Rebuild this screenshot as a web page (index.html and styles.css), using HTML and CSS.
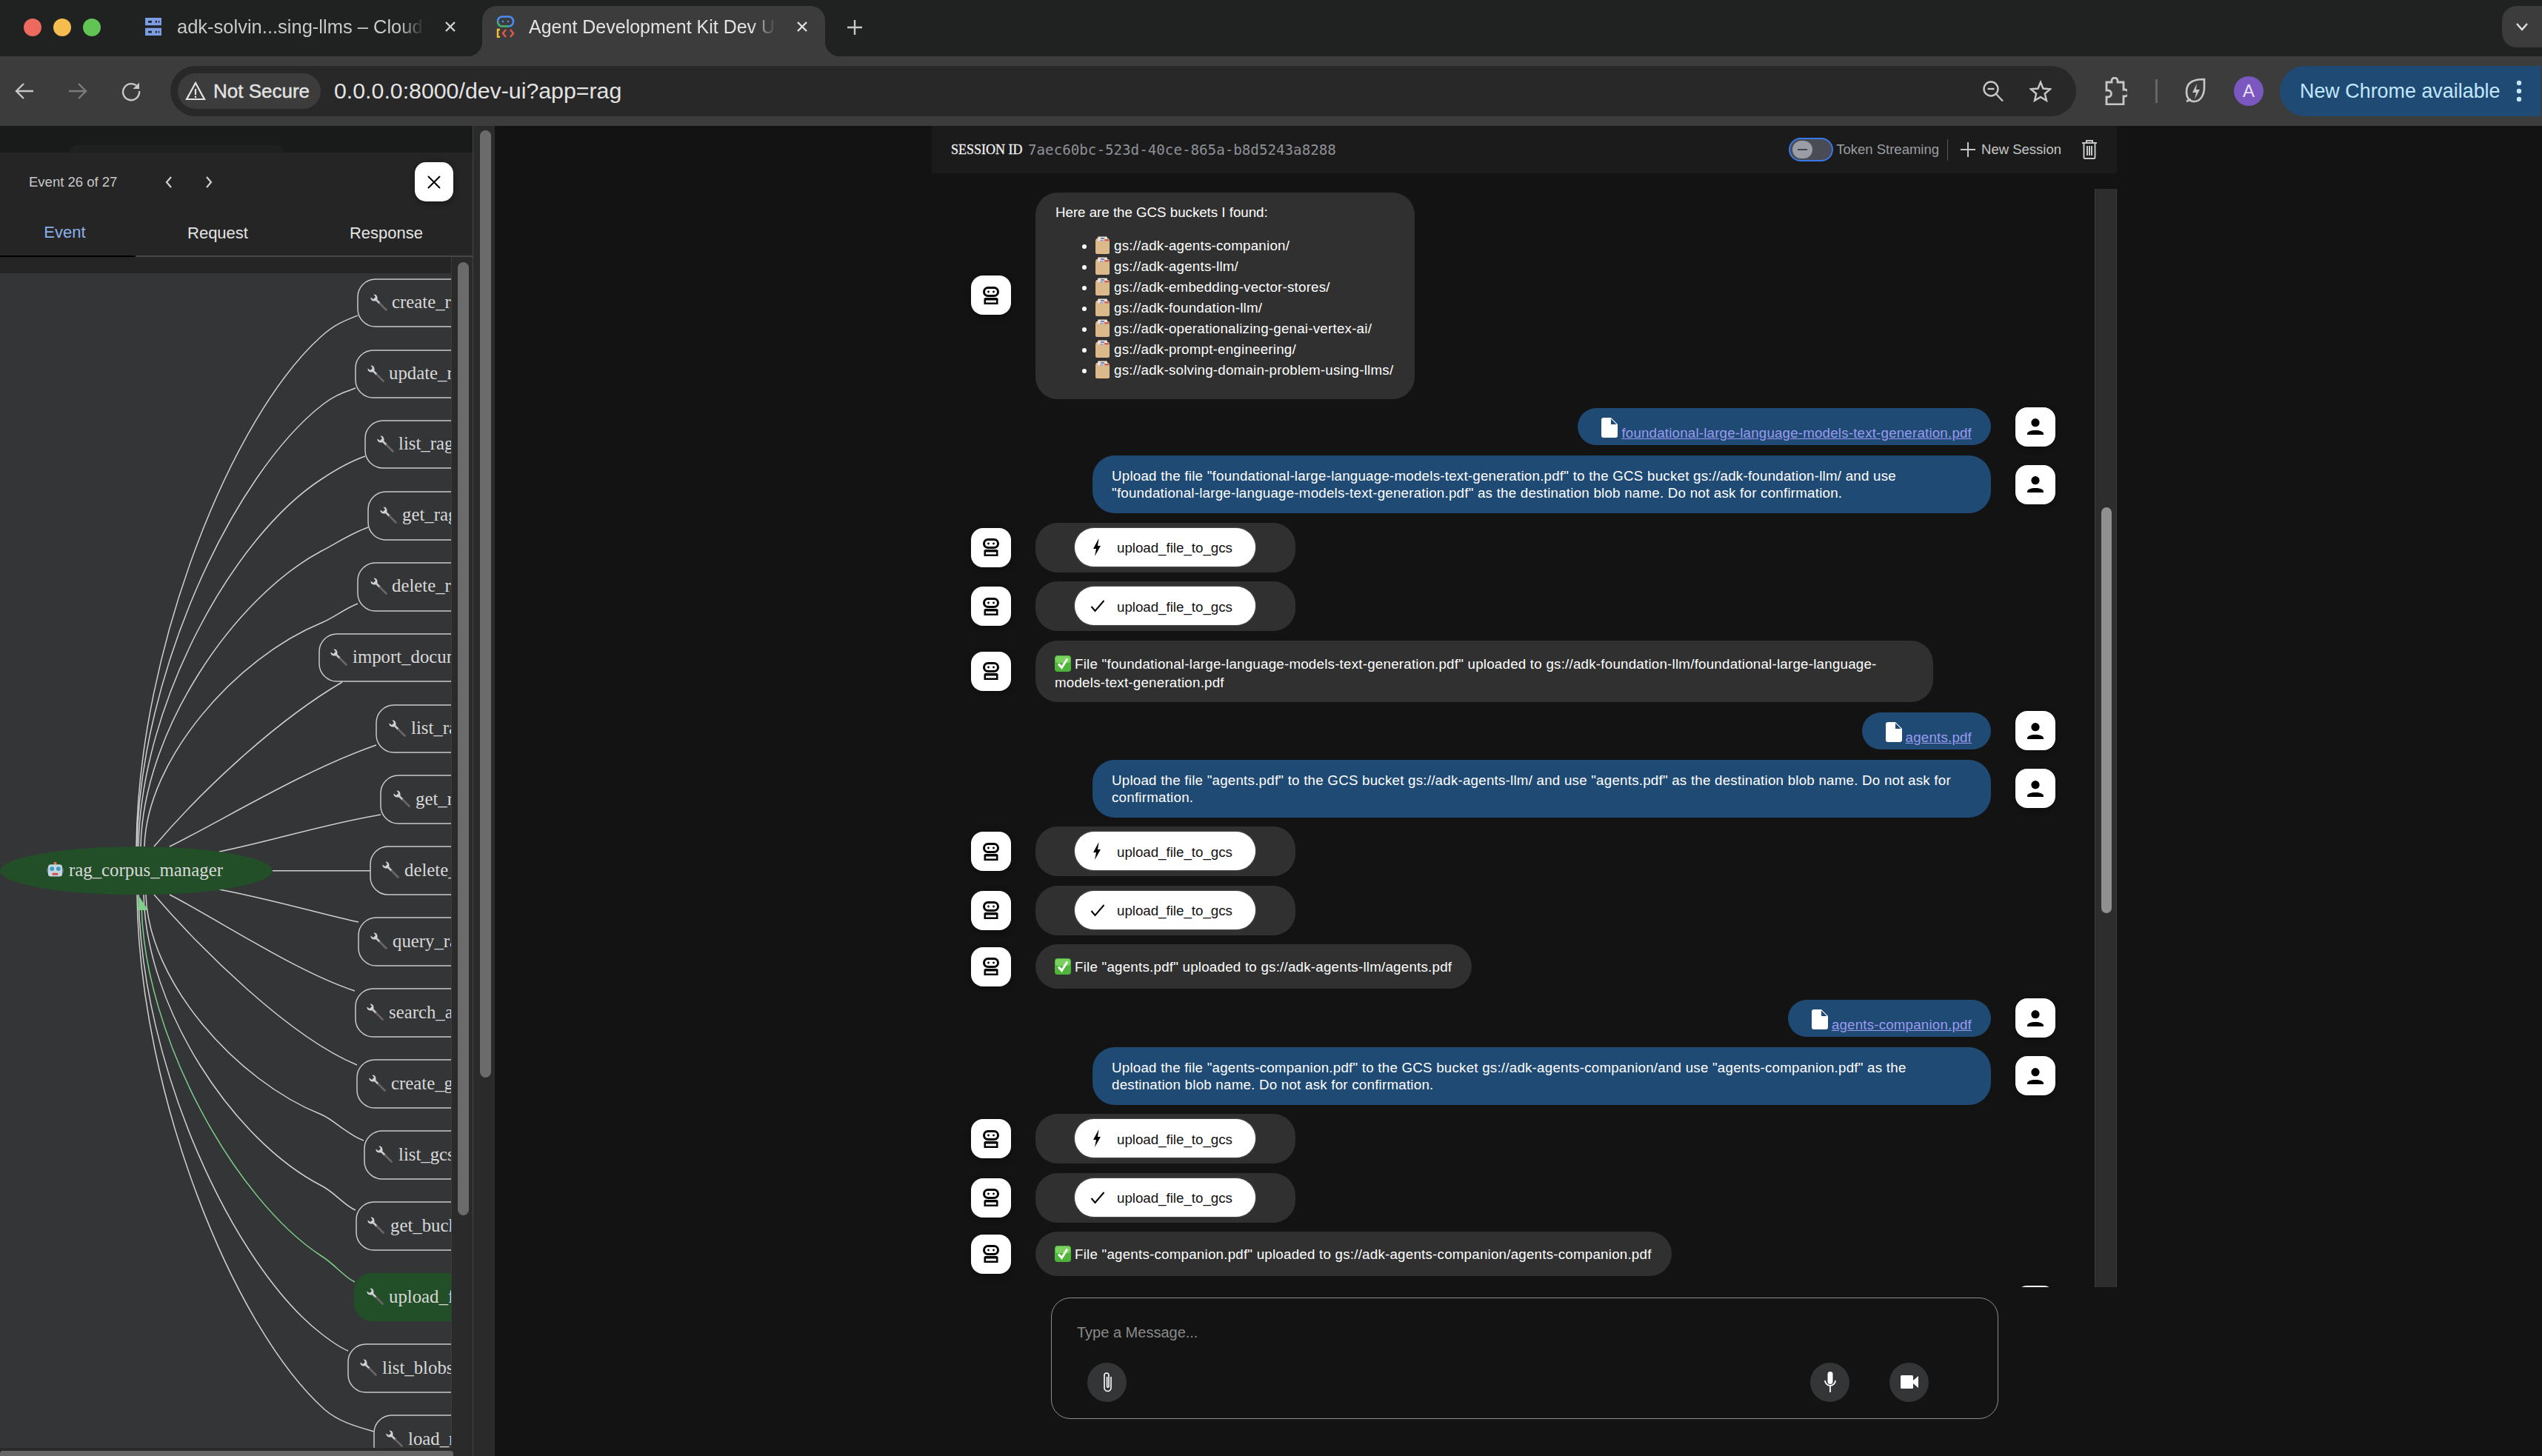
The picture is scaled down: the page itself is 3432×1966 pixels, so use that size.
FILE: index.html
```html
<!DOCTYPE html>
<html lang="en">
<head>
<meta charset="utf-8">
<title>Agent Development Kit Dev UI</title>
<link rel="stylesheet" href="styles.css">
</head>
<body>
<svg class="sprite" aria-hidden="true">
  <symbol id="robot" viewBox="0 0 22 24">
    <rect x="1.5" y="1.5" width="19" height="11" rx="5.5" fill="none" stroke="#000" stroke-width="3"/>
    <circle cx="7.5" cy="7" r="1.4" fill="#000"/><circle cx="14.5" cy="7" r="1.4" fill="#000"/>
    <path d="M3 15h16v0l1.5 1.5V24h-19v-7.500z" fill="#000"/>
    <rect x="4" y="18.500" width="14" height="3" fill="#fff"/>
  </symbol>
  <symbol id="person" viewBox="0 0 22 22">
    <circle cx="11" cy="5.700" r="5.600" fill="#000"/>
    <path d="M0 22v-1.500C0 18 5 16 11 16s11 2 11 4.500V22z" fill="#000"/>
  </symbol>
  <symbol id="file" viewBox="0 0 22 27">
    <path d="M3 0h10l9 9v15a3 3 0 0 1-3 3H3a3 3 0 0 1-3-3V3a3 3 0 0 1 3-3z" fill="#fff"/>
    <path d="M13 1.500L20.500 9H13z" fill="#1f4a73"/>
  </symbol>
  <symbol id="wrench" viewBox="0 0 24 24">
    <path d="M8.500 8.500L14 14" stroke="#c9c9cc" stroke-width="2.600" fill="none"/>
    <path d="M14 14L22.500 22.500" stroke="#6e6468" stroke-width="2.600" fill="none" stroke-linecap="round"/>
    <path d="M1.500 5.500C1 9 4 11 8 10.500L10.500 8C11 4 9 1 5.500 1.500L8 5L5 8z" fill="#d2d2d6"/>
  </symbol>
  <symbol id="bot-emoji" viewBox="0 0 24 22">
    <circle cx="12" cy="2.500" r="2.200" fill="#e0704c"/>
    <rect x="0" y="9" width="24" height="7" rx="2" fill="#5d6b75"/>
    <rect x="2" y="4" width="20" height="17" rx="4" fill="#c3d6df"/>
    <circle cx="7.500" cy="10" r="3" fill="#3d9ac9"/><circle cx="16.500" cy="10" r="3" fill="#3d9ac9"/>
    <rect x="8" y="16" width="8" height="3" fill="#d84a4a"/>
  </symbol>
  <symbol id="box" viewBox="0 0 19 24">
    <path d="M1 3h17l1 3v16a2 2 0 0 1-2 2H2a2 2 0 0 1-2-2V6z" fill="#dcb98a"/>
    <rect x="3" y="0.500" width="13" height="6" rx="1" fill="#efe3d0"/>
    <rect x="7" y="2" width="5" height="2" fill="#6b83c9"/>
    <rect x="12" y="4" width="6" height="2.500" fill="#d2605a"/>
    <rect x="6" y="5" width="5" height="1.500" fill="#8d97c9"/>
  </symbol>
  <symbol id="check-emoji" viewBox="0 0 22 22">
    <rect width="22" height="22" rx="4" fill="#4fb43a"/>
    <rect x="1" y="1" width="20" height="9" rx="3" fill="#7bd15f"/>
    <path d="M5 11.500l4.500 5L17 4.500" fill="none" stroke="#fff" stroke-width="3"/>
  </symbol>
  <symbol id="bolt" viewBox="0 0 12 24">
    <path d="M8.500 0L1 14h4L3 24l8-14H7z" fill="#000"/>
  </symbol>
  <symbol id="tick" viewBox="0 0 20 20">
    <path d="M1.500 11l5 6L18.500 3" fill="none" stroke="#000" stroke-width="2"/>
  </symbol>
</svg>

<header class="chrome">
  <div class="tabstrip">
    <span class="light red"></span><span class="light yellow"></span><span class="light green"></span>
    <div class="tab">
      <svg class="tab-icon" viewBox="0 0 32 35"><path d="M0 0h32v15H0zM0 20h32v15H0z" fill="#7c9ce4"/><path d="M6 6h7v4H6zM20 6h3v4h-3zM26 6h2v4h-2zM6 26h7v4H6zM20 26h3v4h-3zM26 26h2v4h-2z" fill="#202222"/></svg>
      <span class="tab-title">adk-solvin...sing-llms – Cloud</span>
      <svg class="tab-x" viewBox="0 0 18 18"><path d="M3 3l12 12M15 3L3 15" stroke="#d0d0d0" stroke-width="2.400"/></svg>
    </div>
    <div class="tab active">
      <svg class="tab-icon adk" viewBox="0 0 26 30"><rect x="2" y="1.500" width="21" height="13" rx="6" fill="none" stroke="#4c8df5" stroke-width="2.500"/><path d="M2 8a6 6 0 0 0 6 6.500h9" fill="none" stroke="#3fae5a" stroke-width="2.500"/><circle cx="9" cy="8" r="1.300" fill="#4c8df5"/><circle cx="16" cy="8" r="1.300" fill="#4c8df5"/><path d="M5 19H2v10h3" fill="none" stroke="#f5bd2e" stroke-width="2.500"/><path d="M13 19l-4 5 4 5" fill="none" stroke="#e2574c" stroke-width="2.500"/><path d="M19 19l4 5-4 5" fill="none" stroke="#e2574c" stroke-width="2.500"/></svg>
      <span class="tab-title">Agent Development Kit Dev U</span>
      <svg class="tab-x" viewBox="0 0 18 18"><path d="M3 3l12 12M15 3L3 15" stroke="#e0e0e0" stroke-width="2.400"/></svg>
    </div>
    <svg class="new-tab" viewBox="0 0 22 22"><path d="M11 1v20M1 11h20" stroke="#c8c8c8" stroke-width="2.400"/></svg>
    <div class="tab-search"><svg viewBox="0 0 18 12"><path d="M2 2l7 8 7-8" fill="none" stroke="#e3e3e3" stroke-width="2.400"/></svg></div>
  </div>
  <div class="toolbar">
    <svg class="nav" viewBox="0 0 28 28"><path d="M26 14H4M13 4L3 14l10 10" fill="none" stroke="#c7c7c7" stroke-width="2.400"/></svg>
    <svg class="nav" viewBox="0 0 28 28"><path d="M2 14h22M15 4l10 10-10 10" fill="none" stroke="#7c7c7c" stroke-width="2.400"/></svg>
    <svg class="nav" viewBox="0 0 28 28"><path d="M23.500 9.500A11 11 0 1 0 25 14" fill="none" stroke="#c7c7c7" stroke-width="2.400"/><path d="M25 2.500v8.500h-8.500z" fill="#c7c7c7"/></svg>
    <div class="omnibox">
      <div class="chip">
        <svg class="warn" viewBox="0 0 28 26"><path d="M14 2L2 24h24z" fill="none" stroke="#e3e3e3" stroke-width="2.200"/><path d="M14 10v8M14 19.500v2.500" stroke="#e3e3e3" stroke-width="2.200"/></svg>
        <span>Not Secure</span>
      </div>
      <span class="url">0.0.0.0:8000/dev-ui?app=rag</span>
      <svg class="omni-zoom" viewBox="0 0 30 30"><circle cx="12" cy="12" r="9.500" fill="none" stroke="#c7c7c7" stroke-width="2.400"/><path d="M19 19l9 9.500" stroke="#c7c7c7" stroke-width="2.400"/><path d="M7.500 12h9" stroke="#c7c7c7" stroke-width="2.400"/></svg>
      <svg class="omni-star" viewBox="0 0 30 30"><path d="M15 3l3.500 8.500 9.500.8-7.200 6.200 2.200 9.300L15 22.900 6.999 27.800l2.200-9.300L2 12.300l9.500-.8z" fill="none" stroke="#c7c7c7" stroke-width="2.400"/></svg>
    </div>
    <svg class="puzzle" viewBox="0 0 32 38"><path d="M4 6h7V4a4 4 0 0 1 8 0v2h8v10h2a4 4 0 0 1 0 9h-2v11H4V26h2a4 4 0 0 0 0-9H4z" transform="translate(0 1)" fill="none" stroke="#c7c7c7" stroke-width="2.800"/></svg>
    <span class="sep"></span>
    <svg class="perf" viewBox="0 0 30 38"><path d="M27 3C14 3 3 6 3 20c0 8 4 13 10 13h1c7 0 13-8 13-19z" fill="none" stroke="#c7c7c7" stroke-width="2.600"/><path d="M17 9l-6 12h5l-2 9 7-13h-5z" fill="#c7c7c7"/><path d="M3 33l6-3" stroke="#c7c7c7" stroke-width="2.600"/></svg>
    <span class="profile">A</span>
    <div class="update">
      <span>New Chrome available</span>
      <svg class="dots" viewBox="0 0 8 30"><circle cx="4" cy="4" r="3.200" fill="#c2e7ff"/><circle cx="4" cy="15" r="3.200" fill="#c2e7ff"/><circle cx="4" cy="26" r="3.200" fill="#c2e7ff"/></svg>
    </div>
  </div>
</header>

<main class="page">
  <aside class="side">
    <div class="side-main">
      <div class="side-top"><div class="side-top-tab"></div></div>
      <section class="event-panel">
        <div class="event-head">
          <span class="event-count">Event 26 of 27</span>
          <svg class="chev first" viewBox="0 0 12 20"><path d="M9 3L3 10l6 7" fill="none" stroke="#d0d0d0" stroke-width="2.200"/></svg>
          <svg class="chev" viewBox="0 0 12 20"><path d="M3 3l6 7-6 7" fill="none" stroke="#d0d0d0" stroke-width="2.200"/></svg>
          <button class="close"><svg viewBox="0 0 20 20"><path d="M2 2l16 16M18 2L2 18" stroke="#000" stroke-width="2"/></svg></button>
        </div>
        <div class="event-tabs">
          <span class="event-tab on">Event</span>
          <span class="event-tab">Request</span>
          <span class="event-tab">Response</span>
        </div>
      </section>
      <div class="graph-wrap">
        <div class="graph-col">
          <div class="graph-strip"></div>
          <svg class="graph" viewBox="0 369 609 1586">
            <g class="edges">
              <path d="M184 1143C187 874 314 561 434 454C452 438 465 433 483 426"/>
              <path d="M185 1143C188 910 316 639 436 546C454 532 465 530 480 524"/>
              <path d="M187 1143C190 950 315 724 434 647C452 635 470 624 493 616"/>
              <path d="M190 1143C193 987 317 806 434 744C452 735 472 721 497 712"/>
              <path d="M195 1143C198 1025 319 888 434 841C451 834 465 822 483 815"/>
              <path d="M208 1143C270 1070 370 975 462 921"/>
              <path d="M229 1143C300 1108 410 1040 508 1006"/>
              <path d="M296 1150C370 1135 440 1112 514 1100"/>
              <path d="M367 1175.700H500"/>
              <path d="M296 1201C370 1215 440 1236 484 1245"/>
              <path d="M229 1208C300 1245 400 1312 479 1338"/>
              <path d="M208 1208C270 1280 390 1400 482 1438"/>
              <path d="M197 1208C200 1324 318 1459 434 1505C451 1512 470 1533 491 1540"/>
              <path d="M194 1208C197 1361 315 1540 434 1601C452 1610 465 1628 480 1634"/>
              <path d="M187 1208C190 1439 315 1709 434 1801C452 1815 460 1820 470 1824"/>
              <path d="M185 1208C188 1479 317 1795 438 1903C456 1919 480 1926 505 1933"/>
              <path class="edge-on" d="M191 1222C194 1398 317 1620 434 1696C452 1707 465 1725 479 1731"/>
            </g>
            <polygon class="arrow" points="187,1209 186,1229 200,1229"/>
            <ellipse class="agent" cx="184" cy="1175.700" rx="184" ry="32.500"/>
            <use href="#bot-emoji" x="63" y="1163" width="23" height="22"/>
            <text class="agent-label" x="93" y="1184">rag_corpus_manager</text>

            <g class="node"><rect x="483" y="377" width="300" height="64" rx="24"/><use href="#wrench" x="499" y="396" width="24" height="24"/><text x="529" y="417">create_rag_corpus</text></g>
            <g class="node"><rect x="480" y="473" width="300" height="64" rx="24"/><use href="#wrench" x="495" y="492" width="24" height="24"/><text x="525" y="513">update_rag_corpus</text></g>
            <g class="node"><rect x="493" y="568" width="300" height="64" rx="24"/><use href="#wrench" x="508" y="587" width="24" height="24"/><text x="538" y="608">list_rag_corpora</text></g>
            <g class="node"><rect x="497" y="664" width="300" height="65" rx="24"/><use href="#wrench" x="512" y="683" width="24" height="24"/><text x="543" y="704">get_rag_corpus</text></g>
            <g class="node"><rect x="483" y="760" width="300" height="65" rx="24"/><use href="#wrench" x="499" y="779" width="24" height="24"/><text x="529" y="800">delete_rag_corpus</text></g>
            <g class="node"><rect x="431" y="856" width="300" height="64" rx="24"/><use href="#wrench" x="445" y="875" width="24" height="24"/><text x="476" y="896">import_document</text></g>
            <g class="node"><rect x="508" y="952" width="300" height="64" rx="24"/><use href="#wrench" x="524" y="971" width="24" height="24"/><text x="555" y="992">list_rag_files</text></g>
            <g class="node"><rect x="514" y="1047" width="300" height="65" rx="24"/><use href="#wrench" x="530" y="1066" width="24" height="24"/><text x="561" y="1088">get_rag_file</text></g>
            <g class="node"><rect x="500" y="1143" width="300" height="65" rx="24"/><use href="#wrench" x="515" y="1162" width="24" height="24"/><text x="546" y="1184">delete_rag_file</text></g>
            <g class="node"><rect x="484" y="1239" width="300" height="65" rx="24"/><use href="#wrench" x="499" y="1258" width="24" height="24"/><text x="530" y="1280">query_rag_corpus</text></g>
            <g class="node"><rect x="480" y="1335" width="300" height="65" rx="24"/><use href="#wrench" x="494" y="1354" width="24" height="24"/><text x="525" y="1376">search_all_corpora</text></g>
            <g class="node"><rect x="482" y="1431" width="300" height="65" rx="24"/><use href="#wrench" x="497" y="1450" width="24" height="24"/><text x="528" y="1472">create_gcs_bucket</text></g>
            <g class="node"><rect x="492" y="1527" width="300" height="65" rx="24"/><use href="#wrench" x="506" y="1546" width="24" height="24"/><text x="538" y="1568">list_gcs_buckets</text></g>
            <g class="node"><rect x="481" y="1623" width="300" height="65" rx="24"/><use href="#wrench" x="495" y="1642" width="24" height="24"/><text x="527" y="1664">get_bucket_details</text></g>
            <g class="node on"><rect x="478" y="1719" width="300" height="65" rx="24"/><use href="#wrench" x="494" y="1738" width="24" height="24"/><text x="525" y="1760">upload_file_to_gcs</text></g>
            <g class="node"><rect x="470" y="1815" width="300" height="65" rx="24"/><use href="#wrench" x="485" y="1834" width="24" height="24"/><text x="516" y="1856">list_blobs_in_bucket</text></g>
            <g class="node"><rect x="505" y="1911" width="300" height="65" rx="24"/><use href="#wrench" x="520" y="1930" width="24" height="24"/><text x="551" y="1952">load_rag_file</text></g>
          </svg>
        </div>
        <div class="inner-track"><div class="inner-thumb"></div></div>
      </div>
      <div class="hbar"><div class="hthumb"></div></div>
    </div>
    <div class="outer-track"><div class="outer-thumb"></div></div>
  </aside>

  <section class="chat">
    <div class="session-bar">
      <span class="session-label">SESSION ID</span>
      <span class="session-id">7aec60bc-523d-40ce-865a-b8d5243a8288</span>
      <span class="toggle"><span class="knob"></span></span>
      <span class="session-text dim">Token Streaming</span>
      <span class="session-sep"></span>
      <svg class="plus" viewBox="0 0 20 20"><path d="M10 0v20M0 10h20" stroke="#c4c7c5" stroke-width="2"/></svg>
      <span class="session-text">New Session</span>
      <svg class="trash" viewBox="0 0 22 26"><path d="M1 4h20M7 3V1h8v2M3.500 5v19a1.500 1.500 0 0 0 1.500 1h12a1.500 1.500 0 0 0 1.500-1V5M8 8v13M11 8v13M14 8v13" fill="none" stroke="#c4c7c5" stroke-width="2"/></svg>
    </div>
    <div class="chat-body">
      <div class="messages">
        <div class="row">
          <span class="avatar"><svg class="av-bot"><use href="#robot"/></svg></span>
          <div class="bubble bot intro">
            <p>Here are the GCS buckets I found:</p>
            <ul>
              <li><svg class="box-ic"><use href="#box"/></svg>gs://adk-agents-companion/</li>
              <li><svg class="box-ic"><use href="#box"/></svg>gs://adk-agents-llm/</li>
              <li><svg class="box-ic"><use href="#box"/></svg>gs://adk-embedding-vector-stores/</li>
              <li><svg class="box-ic"><use href="#box"/></svg>gs://adk-foundation-llm/</li>
              <li><svg class="box-ic"><use href="#box"/></svg>gs://adk-operationalizing-genai-vertex-ai/</li>
              <li><svg class="box-ic"><use href="#box"/></svg>gs://adk-prompt-engineering/</li>
              <li><svg class="box-ic"><use href="#box"/></svg>gs://adk-solving-domain-problem-using-llms/</li>
            </ul>
          </div>
        </div>

        <div class="row user">
          <div class="bubble file"><svg class="file-ic"><use href="#file"/></svg><a class="file-link">foundational-large-language-models-text-generation.pdf</a></div>
          <span class="avatar"><svg class="av-user"><use href="#person"/></svg></span>
        </div>
        <div class="row user">
          <div class="bubble usertext">Upload the file "foundational-large-language-models-text-generation.pdf" to the GCS bucket gs://adk-foundation-llm/ and use<br>"foundational-large-language-models-text-generation.pdf" as the destination blob name. Do not ask for confirmation.</div>
          <span class="avatar"><svg class="av-user"><use href="#person"/></svg></span>
        </div>
        <div class="row">
          <span class="avatar"><svg class="av-bot"><use href="#robot"/></svg></span>
          <div class="bubble tool"><span class="tool-btn"><svg class="bolt"><use href="#bolt"/></svg>upload_file_to_gcs</span></div>
        </div>
        <div class="row">
          <span class="avatar"><svg class="av-bot"><use href="#robot"/></svg></span>
          <div class="bubble tool"><span class="tool-btn"><svg class="tick"><use href="#tick"/></svg>upload_file_to_gcs</span></div>
        </div>
        <div class="row">
          <span class="avatar"><svg class="av-bot"><use href="#robot"/></svg></span>
          <div class="bubble bot result"><svg class="check-ic"><use href="#check-emoji"/></svg>File "foundational-large-language-models-text-generation.pdf" uploaded to gs://adk-foundation-llm/foundational-large-language-<br>models-text-generation.pdf</div>
        </div>

        <div class="row user">
          <div class="bubble file"><svg class="file-ic"><use href="#file"/></svg><a class="file-link">agents.pdf</a></div>
          <span class="avatar"><svg class="av-user"><use href="#person"/></svg></span>
        </div>
        <div class="row user">
          <div class="bubble usertext">Upload the file "agents.pdf" to the GCS bucket gs://adk-agents-llm/ and use "agents.pdf" as the destination blob name. Do not ask for<br>confirmation.</div>
          <span class="avatar"><svg class="av-user"><use href="#person"/></svg></span>
        </div>
        <div class="row">
          <span class="avatar"><svg class="av-bot"><use href="#robot"/></svg></span>
          <div class="bubble tool"><span class="tool-btn"><svg class="bolt"><use href="#bolt"/></svg>upload_file_to_gcs</span></div>
        </div>
        <div class="row">
          <span class="avatar"><svg class="av-bot"><use href="#robot"/></svg></span>
          <div class="bubble tool"><span class="tool-btn"><svg class="tick"><use href="#tick"/></svg>upload_file_to_gcs</span></div>
        </div>
        <div class="row">
          <span class="avatar"><svg class="av-bot"><use href="#robot"/></svg></span>
          <div class="bubble bot result single"><svg class="check-ic"><use href="#check-emoji"/></svg>File "agents.pdf" uploaded to gs://adk-agents-llm/agents.pdf</div>
        </div>

        <div class="row user">
          <div class="bubble file"><svg class="file-ic"><use href="#file"/></svg><a class="file-link">agents-companion.pdf</a></div>
          <span class="avatar"><svg class="av-user"><use href="#person"/></svg></span>
        </div>
        <div class="row user">
          <div class="bubble usertext">Upload the file "agents-companion.pdf" to the GCS bucket gs://adk-agents-companion/and use "agents-companion.pdf" as the<br>destination blob name. Do not ask for confirmation.</div>
          <span class="avatar"><svg class="av-user"><use href="#person"/></svg></span>
        </div>
        <div class="row">
          <span class="avatar"><svg class="av-bot"><use href="#robot"/></svg></span>
          <div class="bubble tool"><span class="tool-btn"><svg class="bolt"><use href="#bolt"/></svg>upload_file_to_gcs</span></div>
        </div>
        <div class="row">
          <span class="avatar"><svg class="av-bot"><use href="#robot"/></svg></span>
          <div class="bubble tool"><span class="tool-btn"><svg class="tick"><use href="#tick"/></svg>upload_file_to_gcs</span></div>
        </div>
        <div class="row">
          <span class="avatar"><svg class="av-bot"><use href="#robot"/></svg></span>
          <div class="bubble bot result single"><svg class="check-ic"><use href="#check-emoji"/></svg>File "agents-companion.pdf" uploaded to gs://adk-agents-companion/agents-companion.pdf</div>
        </div>
        <div class="row user">
          <span class="avatar"></span>
        </div>
      </div>
      <div class="chat-track"><div class="chat-thumb"></div></div>
    </div>
    <div class="composer">
      <div class="composer-text">Type a Message...</div>
      <div class="composer-actions">
        <span class="round"><svg class="attach" viewBox="0 0 16 30"><path d="M12 8v15a4.500 4.500 0 0 1-9 0V6a3 3 0 0 1 6 0v15a1.200 1.200 0 0 1-2.400 0V8" fill="none" stroke="#fff" stroke-width="1.600" transform="translate(1 0)"/></svg></span>
        <span class="round mic"><svg viewBox="0 0 18 28"><rect x="5.500" y="0" width="7" height="17" rx="3.500" fill="#fff"/><path d="M2 12a7 7 0 0 0 14 0M9 19v9" fill="none" stroke="#fff" stroke-width="1.800"/></svg></span>
        <span class="round cam"><svg viewBox="0 0 24 18"><rect x="0" y="0" width="17" height="18" rx="1.500" fill="#fff"/><path d="M17 7l7-6v16l-7-6z" fill="#fff"/></svg></span>
      </div>
    </div>
  </section>
</main>
</body>
</html>
```

FILE: styles.css
```css
* { box-sizing: border-box; }
html, body { margin: 0; height: 100%; }
body {
  width: 3432px;
  height: 1966px;
  overflow: hidden;
  background: #131313;
  color: #fff;
  font-family: "Liberation Sans", Arial, sans-serif;
}
.sprite { width: 0; height: 0; display: block; overflow: hidden; }

/* browser chrome */
.chrome { height: 170px; }
.tabstrip {
  height: 76px;
  background: #202222;
  display: flex;
  align-items: flex-end;
  padding-left: 32px;
}
.light { width: 24px; height: 24px; border-radius: 50%; margin: 0 16px 27px 0; flex: none; }
.red { background: #ee6a5f; }
.yellow { background: #f5bd4f; }
.green { background: #61c454; }
.tab {
  position: relative;
  height: 68px;
  display: flex;
  align-items: center;
  padding: 0 0 12px 39px;
  width: 486px;
  flex: none;
  font-size: 25.500px;
  color: #c9c9c9;
}
.tab.active {
  width: 463px;
  margin-left: 13px;
  padding-left: 19px;
  background: #3c3c3c;
  border-radius: 20px 20px 0 0;
  color: #e3e3e3;
  font-size: 25px;
}
.tab.active::before, .tab.active::after {
  content: "";
  position: absolute;
  bottom: 0;
  width: 20px;
  height: 20px;
}
.tab.active::before { left: -20px; background: radial-gradient(circle at 0 0, transparent 20px, #3c3c3c 20.5px); }
.tab.active::after { right: -20px; background: radial-gradient(circle at 100% 0, transparent 20px, #3c3c3c 20.5px); }
.tab-icon { width: 32px; height: 24px; flex: none; margin-right: 16px; }
.tab-icon.adk { width: 26px; height: 30px; margin-right: 18px; }
.tab-title {
  width: 334px;
  flex: none;
  overflow: hidden;
  white-space: nowrap;
  -webkit-mask-image: linear-gradient(90deg, #000 90%, transparent);
  mask-image: linear-gradient(90deg, #000 90%, transparent);
}
.tab-x { width: 18px; height: 18px; margin-left: 26px; flex: none; }
.new-tab { width: 22px; height: 22px; margin: 0 0 28px 29px; flex: none; }
.tab-search {
  margin-left: auto;
  width: 54px;
  height: 56px;
  margin-bottom: 12px;
  background: #3c3c3c;
  border-radius: 20px 0 0 20px;
  display: flex;
  align-items: center;
  justify-content: center;
}
.tab-search svg { width: 18px; height: 12px; }
.toolbar {
  height: 94px;
  background: #3c3c3c;
  display: flex;
  align-items: center;
  padding-left: 19px;
  position: relative;
}
.nav { width: 28px; height: 28px; margin-right: 44px; flex: none; }
.nav:nth-child(3) { margin-right: 0; }
.omnibox {
  width: 2573px;
  height: 68px;
  margin-left: 39px;
  background: #282828;
  border-radius: 34px;
  display: flex;
  align-items: center;
  padding: 0 33px 0 10px;
  flex: none;
}
.chip {
  height: 48px;
  width: 193px;
  background: #3c3c3c;
  border-radius: 24px;
  display: flex;
  align-items: center;
  padding-left: 10px;
  font-size: 26px;
  color: #e3e3e3;
}
.warn { width: 28px; height: 26px; margin-right: 10px; flex: none; }
.chip span { -webkit-text-stroke: 0.4px #e3e3e3; }
.url { margin-left: 18px; font-size: 30.300px; color: #e3e3e3; }
.omni-zoom { width: 30px; height: 30px; margin-left: auto; }
.omni-star { width: 30px; height: 30px; margin-left: 34px; }
.puzzle { width: 32px; height: 38px; margin-left: 37px; flex: none; }
.sep { width: 3px; height: 32px; background: #666; margin-left: 38px; flex: none; }
.perf { width: 30px; height: 38px; margin-left: 36px; flex: none; }
.profile {
  width: 40px;
  height: 40px;
  border-radius: 50%;
  background: #7a58bf;
  color: #e8e0f5;
  font-size: 24px;
  display: flex;
  align-items: center;
  justify-content: center;
  margin-left: 37px;
  flex: none;
}
.update {
  flex: none;
  width: 352px;
  height: 68px;
  margin-left: 22px;
  border-radius: 34px 0 0 34px;
  background: #1f4a73;
  color: #c2e7ff;
  display: flex;
  align-items: center;
  padding-left: 27px;
  font-size: 26.900px;
  white-space: nowrap;
}
.dots { width: 8px; height: 30px; margin-left: 21px; flex: none; }

/* layout */
.page { display: flex; height: 1796px; }

/* left panel */
.side { width: 668px; display: flex; flex: none; }
.side-main { width: 638px; display: flex; flex-direction: column; flex: none; }
.side-top { height: 36px; background: #191a1a; padding: 26px 0 0 93px; flex: none; }
.side-top-tab { width: 290px; height: 10px; background: #1f2020; border-radius: 10px 10px 0 0; }
.event-panel { height: 141px; background: #252525; flex: none; }
.event-head { height: 66px; padding: 13px 0 0 39px; display: flex; align-items: center; }
.event-count { font-size: 18.500px; color: #c9c9c9; width: 120px; white-space: nowrap; }
.chev { width: 12px; height: 20px; flex: none; margin-left: 42px; }
.chev.first { margin-left: 63px; }
.close {
  margin-left: auto;
  margin-right: 26px;
  width: 52px;
  height: 53px;
  border: 0;
  padding: 0;
  background: #fff;
  border-radius: 15px;
  box-shadow: 0 2px 8px rgba(0,0,0,.4);
  display: flex;
  align-items: center;
  justify-content: center;
}
.close svg { width: 20px; height: 20px; }
.event-tabs {
  margin-top: 11px;
  height: 64px;
  display: grid;
  grid-template-columns: 183px 222px 233px;
  border-bottom: 2px solid #474747;
}
.event-tab {
  font-size: 22px;
  color: #e3e3e3;
  display: flex;
  align-items: center;
  justify-content: center;
  height: 64px;
}
.event-tab.on { color: #8ab0ec; border-bottom: 2px solid #000; padding-right: 8px; }
.graph-wrap { flex: 1; display: flex; min-height: 0; }
.graph-col { width: 609px; display: flex; flex-direction: column; flex: none; }
.graph-strip { height: 22px; background: #252525; flex: none; }
.graph { display: block; width: 609px; height: 1586px; background: #333537; overflow: hidden; flex: none; }
.edges path { fill: none; stroke: #d0d0d0; stroke-width: 1.500; }
.edges path.edge-on { stroke: #7ed08a; }
.arrow { fill: #7ed08a; }
.agent { fill: #224f27; }
.agent-label, .node text {
  font-family: "Liberation Serif", "Times New Roman", serif;
  font-size: 24.800px;
  fill: #d8d8d8;
  transform: translateY(-1.500px);
}
.node rect { fill: #333537; stroke: #c9c9c9; stroke-width: 1.500; }
.node.on rect { fill: #224f27; stroke: none; }
.inner-track { width: 29px; background: #2a2a2a; padding: 7px 5px 0 8px; flex: none; border-left: 1px solid #3a3a3a; }
.inner-thumb { height: 1287px; background: #6b6b6b; border-radius: 8px; }
.hbar { height: 11px; background: #2a2a2a; padding-top: 4px; flex: none; }
.hthumb { width: 612px; height: 7px; background: #666; border-radius: 4px 4px 0 0; }
.outer-track { width: 30px; background: #2a2a2a; padding: 6px 5px 0 9px; flex: none; border-left: 1px solid #444; }
.outer-thumb { height: 1279px; background: #6b6b6b; border-radius: 8px; }

/* chat */
.chat { flex: 1; padding-left: 590px; display: flex; flex-direction: column; min-width: 0; }
.session-bar {
  width: 1600px;
  height: 64px;
  background: #1b1b1b;
  display: flex;
  align-items: center;
  padding-left: 26px;
  flex: none;
}
.session-label { font-family: "Liberation Serif", serif; font-size: 18px; color: #f0f0f0; -webkit-text-stroke: 0.3px #f0f0f0; width: 104px; white-space: nowrap; }
.session-id { font-family: "DejaVu Sans Mono", monospace; font-size: 19.200px; color: #8e9197; white-space: nowrap; width: 417px; }
.toggle {
  margin-left: auto;
  width: 60px;
  height: 32px;
  border: 2px solid #3b78e7;
  border-radius: 16px;
  background: #4a4c55;
  padding: 2px 3px;
  display: flex;
  flex: none;
}
.knob { width: 27px; height: 24px; border-radius: 13px; background: #9b9da6; position: relative; }
.knob::after { content: ""; position: absolute; left: 7px; right: 7px; top: 11px; height: 2px; background: #45474f; }
.session-text { font-size: 18.500px; color: #c4c7c5; white-space: nowrap; }
.session-text.dim { color: #9a9ea3; margin-left: 4px; }
.session-sep { width: 1px; height: 29px; background: #555; margin: 0 17px 0 11px; }
.plus { width: 20px; height: 20px; margin-right: 8px; flex: none; }
.trash { width: 22px; height: 26px; margin: 0 26px 0 27px; flex: none; }
.chat-body { width: 1600px; height: 1504px; display: flex; flex: none; }
.messages {
  width: 1570px;
  flex: none;
  overflow: hidden;
  padding: 26px 53px 0;
  display: flex;
  flex-direction: column;
  gap: 12.550px;
}
.chat-track { width: 30px; margin-top: 21px; background: #2d2d2d; padding: 430px 6px 0 8px; flex: none; border-left: 1px solid #3c3c3c; border-right: 1px solid #3c3c3c; }
.chat-thumb { height: 548px; background: #909090; border-radius: 8px; }
.row { display: flex; align-items: center; gap: 33px; flex: none; }
.row.user { justify-content: flex-end; }
.avatar {
  width: 54px;
  height: 53px;
  background: #fff;
  border-radius: 16px;
  display: flex;
  align-items: center;
  justify-content: center;
  flex: none;
  box-shadow: 0 2px 8px rgba(0,0,0,.35);
}
.av-bot { width: 22px; height: 24px; }
.av-user { width: 22px; height: 22px; }
.bubble { font-size: 18.700px; line-height: 23px; color: #fff; letter-spacing: 0.25px; }
.bot { background: #303030; border-radius: 30px; }
.intro { width: 512px; padding: 13px 26px 25px 27px; line-height: 28px; margin-bottom: -2px; }
.intro p { margin: 0 0 17px; letter-spacing: 0; }
.intro ul { margin: 0; padding: 0 0 0 54px; white-space: nowrap; }
.intro li { height: 28px; }
.box-ic { width: 19px; height: 24px; vertical-align: -5px; margin-right: 6px; }
.file {
  height: 50px;
  background: #1f4a73;
  border-radius: 25px;
  display: flex;
  align-items: flex-end;
  padding: 0 26px 5px 32px;
  white-space: nowrap;
}
.file-ic { width: 22px; height: 27px; margin: 0 5px 5px 0; flex: none; }
.file-link { color: #9a9bf0; text-decoration: underline; letter-spacing: 0.21px; }
.usertext { max-width: 1213px; background: #1f4a73; border-radius: 30px; padding: 16px 26px; width: 1213px; }
.tool { width: 351px; height: 67px; background: #303030; border-radius: 30px; padding: 7px 54px 0 53px; letter-spacing: 0; }
.tool-btn {
  height: 52px;
  background: #fff;
  border-radius: 26px;
  color: #111;
  display: flex;
  align-items: center;
  padding: 2px 0 0 57px;
  position: relative;
  white-space: nowrap;
  box-shadow: 0 0 2px #888;
}
.bolt { position: absolute; left: 24px; top: 14px; width: 12px; height: 24px; }
.tick { position: absolute; left: 21px; top: 16px; width: 20px; height: 20px; }
.result { width: 1212px; padding: 19px 26px 14px; line-height: 25px; }
.result.single { width: auto; padding: 17.500px 27px 17.500px 26px; }
.check-ic { width: 22px; height: 22px; vertical-align: -4px; margin-right: 5px; }

/* composer */
.composer {
  width: 1279px;
  height: 164px;
  margin: 13.500px 0 0 161px;
  border: 1.500px solid #8e8e8e;
  border-radius: 26px;
  flex: none;
  padding: 34px 93px 0 34px;
}
.composer-text { font-size: 20px; line-height: 24px; color: #8a8a8a; }
.composer-actions { display: flex; gap: 54px; margin-top: 29px; padding-left: 14px; }
.round {
  width: 53px;
  height: 53px;
  border-radius: 50%;
  background: #333537;
  display: flex;
  align-items: center;
  justify-content: center;
  flex: none;
}
.round.mic { margin-left: auto; }
.attach { width: 16px; height: 30px; }
.mic svg { width: 18px; height: 28px; }
.cam svg { width: 24px; height: 18px; }
```
